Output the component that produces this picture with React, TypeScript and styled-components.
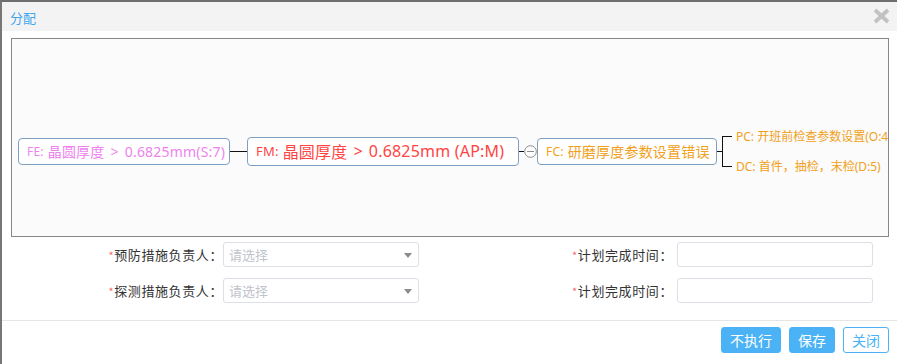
import styled, { createGlobalStyle } from "styled-components";

const GlobalStyle = createGlobalStyle`
  html, body {
    margin: 0;
    padding: 0;
    background: #ffffff;
  }
  body {
    font-family: "Noto Sans", "Noto Sans CJK SC", sans-serif;
    color: #333;
  }
`;

const BLUE = "#4bb3f5";

export default function App() {
  return (
    <>
      <GlobalStyle />
      <Dialog>
        <Header>
          <Title>分配</Title>
          <CloseButton aria-label="close">
            <svg width="17" height="16" viewBox="0 0 17 16">
              <path d="M2 2 L15 14 M15 2 L2 14" stroke="#c2c2c2" strokeWidth="3.8" />
            </svg>
          </CloseButton>
        </Header>

        <Diagram>
          <Chain>
            <Node $color="#ee82ee" $width={212}>
              <Tag>FE:</Tag> 晶圆厚度 <Gt>&gt;</Gt> 0.6825mm(S:7)
            </Node>
            <Wire $width={17} />
            <Node $color="#ff4444" $width={272} $size={16} $height={29}>
              <Tag $size={13}>FM:</Tag> 晶圆厚度 <Gt>&gt;</Gt> 0.6825mm (AP:M)
            </Node>
            <Wire $width={5} />
            <svg width="13" height="13" viewBox="0 0 13 13">
              <circle cx="6.5" cy="6.5" r="5.8" fill="#fff" stroke="#8a8a8a" strokeWidth="1" />
              <path d="M3 6.5 H10" stroke="#8a8a8a" strokeWidth="1" />
            </svg>
            <Node $color="#f0a020" $width={180}>
              <Tag>FC:</Tag> 研磨厚度参数设置错误
            </Node>
            <Branches>
              <svg width="15" height="33" viewBox="0 0 15 33">
                <path d="M0 16.5 H5.5 M5.5 1 V32 M5 1.5 H15 M5 31.5 H15" stroke="#111" strokeWidth="1" fill="none" />
              </svg>
              <BranchList>
                <Branch>PC: 开班前检查参数设置(O:4)</Branch>
                <Branch>DC: 首件，抽检，末检(D:5)</Branch>
              </BranchList>
            </Branches>
          </Chain>
        </Diagram>

        <Form>
          <Label>
            <Star>*</Star>预防措施负责人：
          </Label>
          <Select>
            <Placeholder>请选择</Placeholder>
            <Caret />
          </Select>
          <Label $wide>
            <Star>*</Star>计划完成时间：
          </Label>
          <Input />

          <Label>
            <Star>*</Star>探测措施负责人：
          </Label>
          <Select>
            <Placeholder>请选择</Placeholder>
            <Caret />
          </Select>
          <Label $wide>
            <Star>*</Star>计划完成时间：
          </Label>
          <Input />
        </Form>

        <Footer>
          <Button $primary>不执行</Button>
          <Button $primary>保存</Button>
          <Button>关闭</Button>
        </Footer>
      </Dialog>
    </>
  );
}

const Dialog = styled.div`
  width: 897px;
  height: 364px;
  box-sizing: border-box;
  border-top: 2px solid #6e6e6e;
  border-left: 2px solid #777;
  background: #fff;
  display: flex;
  flex-direction: column;
  overflow: hidden;
`;

const Header = styled.div`
  height: 29px;
  background: #f3f3f3;
  display: flex;
  align-items: center;
  justify-content: space-between;
  padding: 0 7px 0 8px;
`;

const Title = styled.span`
  font-family: "Noto Sans CJK SC", sans-serif;
  font-size: 13px;
  color: #3fa7ee;
  margin-top: 1px;
`;

const CloseButton = styled.span`
  display: flex;
  width: 17px;
  height: 16px;
  margin-top: -2px;
`;

const Diagram = styled.div`
  margin: 7px 8px 0 9px;
  height: 199px;
  box-sizing: border-box;
  border: 1px solid #878787;
  background: #fbfbfb;
  padding: 27px 0 0 6px;
  display: flex;
  align-items: center;
  overflow: hidden;
`;

const Chain = styled.div`
  display: flex;
  align-items: center;
  white-space: nowrap;
`;

const Node = styled.div<{ $color: string; $width: number; $size?: number; $height?: number }>`
  box-sizing: border-box;
  width: ${({ $width }) => $width}px;
  height: ${({ $height }) => $height ?? 27}px;
  border: 1px solid #7d9fc2;
  border-radius: 4px;
  background: #fff;
  color: ${({ $color }) => $color};
  font-family: "Noto Sans", "Noto Sans CJK SC", sans-serif;
  font-size: ${({ $size }) => $size ?? 14}px;
  letter-spacing: 0.2px;
  display: flex;
  align-items: center;
  padding-left: 8px;
  gap: 4px;
  white-space: nowrap;
`;

const Tag = styled.span<{ $size?: number }>`
  font-size: ${({ $size }) => $size ?? 12}px;
`;

const Gt = styled.span`
  margin: 0 2px;
`;

const Wire = styled.span<{ $width: number }>`
  display: block;
  width: ${({ $width }) => $width}px;
  height: 1px;
  background: #111;
`;

const Branches = styled.div`
  display: flex;
  align-items: center;
`;

const BranchList = styled.div`
  display: flex;
  flex-direction: column;
  gap: 14px;
  margin-left: 4px;
  margin-top: 2px;
`;

const Branch = styled.span`
  font-family: "Noto Sans", "Noto Sans CJK SC", sans-serif;
  font-size: 12px;
  line-height: 16px;
  color: #f0a020;
`;

const Form = styled.div`
  display: grid;
  grid-template-columns: 221px 196px 258px 196px;
  grid-auto-rows: 25px;
  row-gap: 11px;
  margin-top: 5px;
  align-items: center;
`;

const Label = styled.label<{ $wide?: boolean }>`
  font-family: "Noto Sans CJK SC", sans-serif;
  font-size: 13px;
  letter-spacing: 0.6px;
  color: #333;
  text-align: right;
  padding-right: ${({ $wide }) => ($wide ? 4 : 0)}px;
  white-space: nowrap;
`;

const Star = styled.span`
  color: #f56c6c;
  font-size: 11px;
`;

const Select = styled.div`
  box-sizing: border-box;
  height: 25px;
  border: 1px solid #dcdfe6;
  border-radius: 3px;
  display: flex;
  align-items: center;
  justify-content: space-between;
  padding: 0 6px 0 5px;
  background: #fff;
`;

const Placeholder = styled.span`
  font-family: "Noto Sans CJK SC", sans-serif;
  font-size: 13px;
  color: #c0c4cc;
`;

const Caret = styled.span`
  width: 0;
  height: 0;
  border-left: 4px solid transparent;
  border-right: 4px solid transparent;
  border-top: 5px solid #8c8c8c;
  margin-top: 2px;
`;

const Input = styled.div`
  box-sizing: border-box;
  height: 25px;
  border: 1px solid #dcdfe6;
  border-radius: 3px;
  background: #fff;
`;

const Footer = styled.div`
  margin-top: 17px;
  border-top: 1px solid #e5e5e5;
  display: flex;
  justify-content: flex-end;
  gap: 8px;
  padding: 6px 8px 0 0;
`;

const Button = styled.button<{ $primary?: boolean }>`
  box-sizing: border-box;
  height: 26px;
  padding: 0 8px;
  border-radius: 3px;
  border: 1px solid ${BLUE};
  background: ${({ $primary }) => ($primary ? BLUE : "#fff")};
  color: ${({ $primary }) => ($primary ? "#fff" : BLUE)};
  font-family: "Noto Sans CJK SC", sans-serif;
  font-size: 14px;
  line-height: 24px;
  cursor: pointer;
`;
